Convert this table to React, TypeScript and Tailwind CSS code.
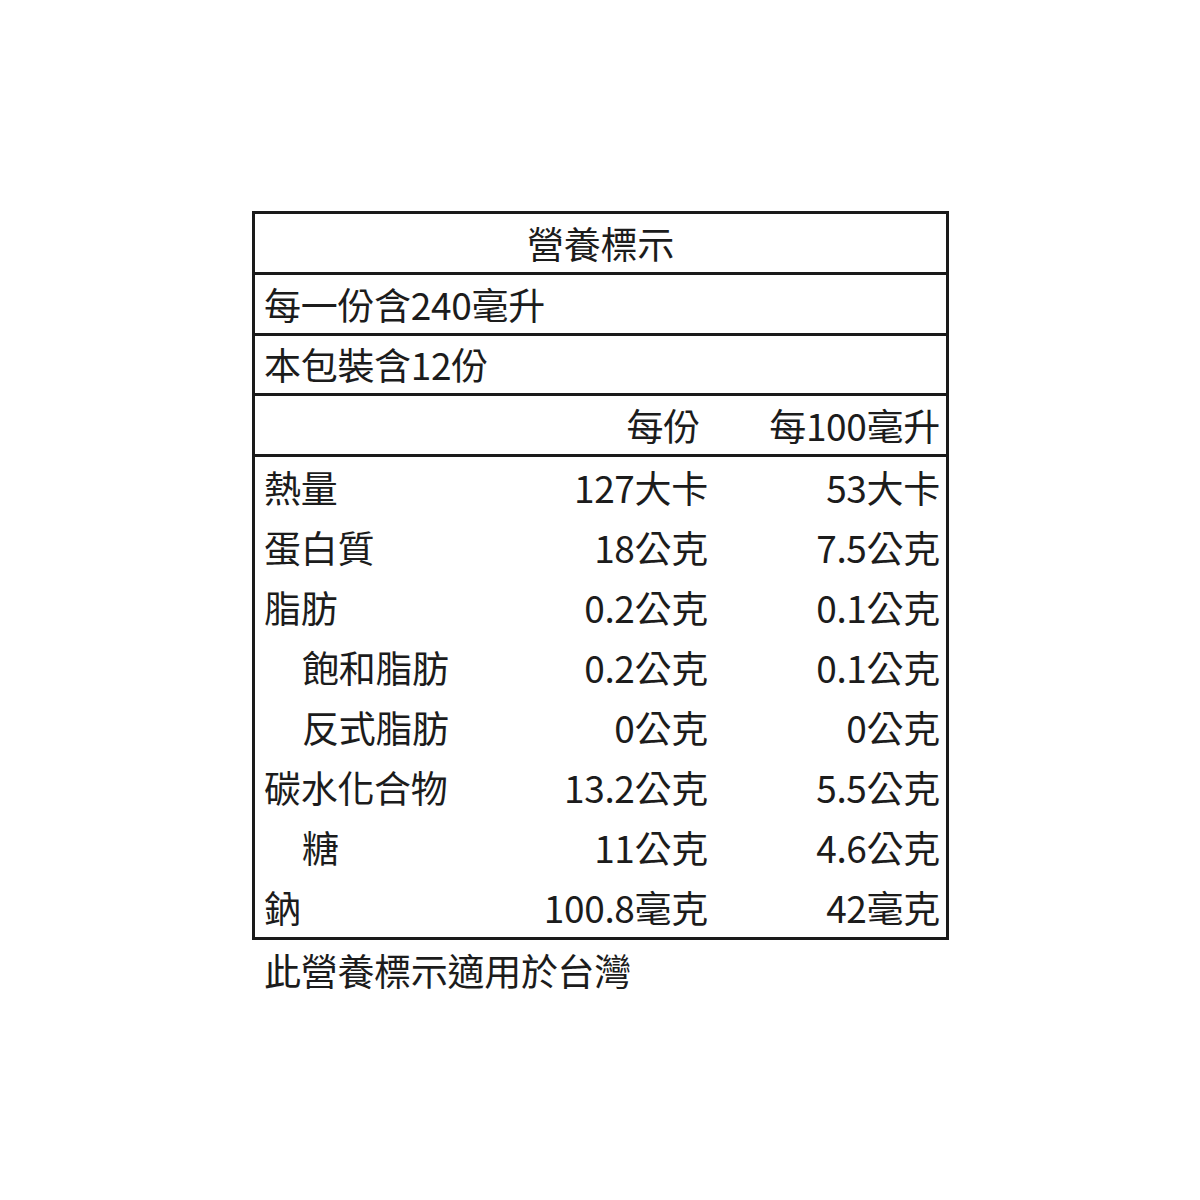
const rows: { label: string; indent?: boolean; perServing: string; per100: string }[] = [
  { label: '熱量', perServing: '127大卡', per100: '53大卡' },
  { label: '蛋白質', perServing: '18公克', per100: '7.5公克' },
  { label: '脂肪', perServing: '0.2公克', per100: '0.1公克' },
  { label: '飽和脂肪', indent: true, perServing: '0.2公克', per100: '0.1公克' },
  { label: '反式脂肪', indent: true, perServing: '0公克', per100: '0公克' },
  { label: '碳水化合物', perServing: '13.2公克', per100: '5.5公克' },
  { label: '糖', indent: true, perServing: '11公克', per100: '4.6公克' },
  { label: '鈉', perServing: '100.8毫克', per100: '42毫克' },
];

export default function App() {
  return (
    <div
      className="min-h-[1200px] w-[1200px] bg-white pl-[252px] pt-[211px] text-[#1c1c1c]"
      style={{ fontFamily: '"Noto Sans CJK TC", "Noto Sans", sans-serif' }}
    >
      <div className="w-[697px] border-[3px] border-[#1a1a1a] text-[37px] leading-none tracking-[-0.3px]">
        {/* header */}
        <div className="flex h-[61px] items-center justify-center border-b-[3px] border-[#1a1a1a]">
          營養標示
        </div>
        <div className="flex h-[61px] items-center border-b-[3px] border-[#1a1a1a] pl-[9px]">
          每一份含240毫升
        </div>
        <div className="flex h-[60px] items-center border-b-[3px] border-[#1a1a1a] pl-[9px]">
          本包裝含12份
        </div>
        <div className="grid h-[61px] grid-cols-[1fr_250px_232px] items-center border-b-[3px] border-[#1a1a1a] pl-[9px] pr-[6px]">
          <div />
          <div className="pr-[8px] text-right">每份</div>
          <div className="text-right">每100毫升</div>
        </div>

        {/* body */}
        {rows.map((r) => (
          <div
            key={r.label}
            className="grid h-[60px] grid-cols-[1fr_250px_232px] items-center pl-[9px] pr-[6px]"
          >
            <div className={r.indent ? 'pl-[38px]' : ''}>{r.label}</div>
            <div className="text-right">{r.perServing}</div>
            <div className="text-right">{r.per100}</div>
          </div>
        ))}
      </div>
      <div className="pl-[12px] pt-[12px] text-[37px] leading-none tracking-[-0.3px]">此營養標示適用於台灣</div>
    </div>
  );
}
